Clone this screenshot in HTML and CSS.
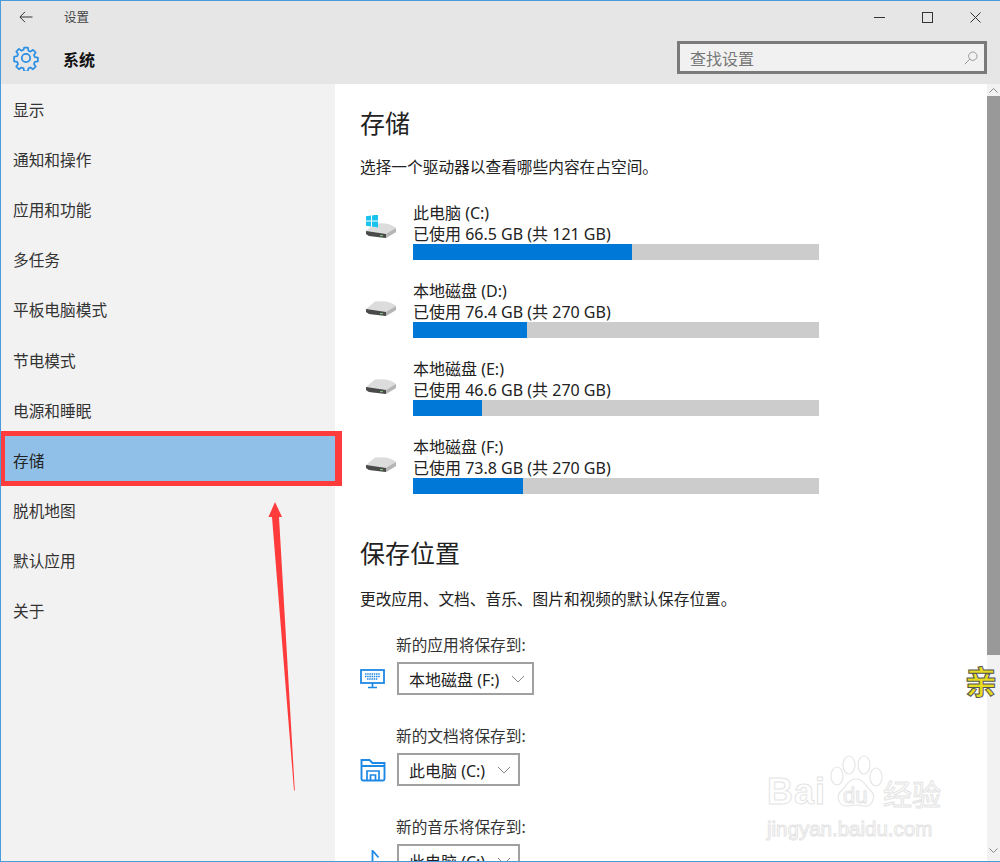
FILE: index.html
```html
<!DOCTYPE html>
<html lang="zh-CN">
<head>
<meta charset="utf-8">
<title>设置</title>
<link rel="stylesheet" href="styles.css">
</head>
<body>
<div class="window">
  <header class="header">
    <div class="titlebar">
      <svg class="back" viewBox="0 0 14 12" width="14" height="12"><path d="M13.500 6H1M6 .8 .9 6 6 11.200" fill="none" stroke="#333" stroke-width="1"/></svg>
      <span class="app-title">设置</span>
      <div class="controls">
        <svg viewBox="0 0 11 11" width="11" height="11"><path d="M0 5.500h11" stroke="#333" stroke-width="1"/></svg>
        <svg viewBox="0 0 11 11" width="11" height="11"><rect x=".5" y=".5" width="10" height="10" fill="none" stroke="#333"/></svg>
        <svg viewBox="0 0 11 11" width="11" height="11"><path d="M.5.500l10 10M10.500.500l-10 10" stroke="#333" stroke-width="1"/></svg>
      </div>
    </div>
    <div class="sysbar">
      <svg class="gear" viewBox="0 0 26 26" width="26" height="26">
        <path d="M10.900 1.500h4.200l.6 3.400 2.300 1 2.800-2 3 3-2 2.800 1 2.300 3.400.6v4.200l-3.400.6-1 2.300 2 2.800-3 3-2.800-2-2.300 1-.6 3.400h-4.200l-.6-3.400-2.300-1-2.800 2-3-3 2-2.800-1-2.300-3.400-.6V11.600l3.400-.6 1-2.300-2-2.800 3-3 2.800 2 2.300-1z" transform="translate(1.300 1.300) scale(.9)" fill="none" stroke="#2b8fe3" stroke-width="1.900" stroke-linejoin="round"/>
        <circle cx="13" cy="13" r="4.200" fill="none" stroke="#2b8fe3" stroke-width="1.800"/>
      </svg>
      <span class="sys-title">系统</span>
      <div class="search">
        <span class="search-text">查找设置</span>
        <svg viewBox="0 0 14 14" width="14" height="14"><circle cx="8.800" cy="5.200" r="4.200" fill="none" stroke="#999" stroke-width="1"/><path d="M5.800 8.200.8 13.200" stroke="#999" stroke-width="1"/></svg>
      </div>
    </div>
  </header>

  <div class="body">
    <nav class="sidebar">
      <a class="nav-item">显示</a>
      <a class="nav-item">通知和操作</a>
      <a class="nav-item">应用和功能</a>
      <a class="nav-item">多任务</a>
      <a class="nav-item">平板电脑模式</a>
      <a class="nav-item">节电模式</a>
      <a class="nav-item">电源和睡眠</a>
      <a class="nav-item selected">存储</a>
      <a class="nav-item">脱机地图</a>
      <a class="nav-item">默认应用</a>
      <a class="nav-item">关于</a>
    </nav>

    <main class="content">
      <h1 class="heading">存储</h1>
      <p class="desc">选择一个驱动器以查看哪些内容在占空间。</p>

      <div class="drives">
        <div class="drive">
          <svg class="drive-icon" viewBox="0 0 30 24" width="30" height="24">
            <path d="M0 16 9 8.500Q24 7 30 13v4l-10 6-17-2-3-2z" fill="#dcdcdc"/><path d="M20 19 30 13v4l-10 6z" fill="#b5b5b5"/><path d="M0 16 20 19v4L3 21l-3-2z" fill="#4a4a4a"/><rect x="14" y="20" width="3" height="1.200" fill="#7ac07a"/>
            <path d="M0 1.200 5 .5v5H0zM6 .4l6-.9v6H6zM0 6.500h5v5l-5-.7zM6 6.500h6v6l-6-.9z" fill="#19c3ee"/>
          </svg>
          <div class="drive-info">
            <div class="drive-name">此电脑 (C:)</div>
            <div class="drive-use">已使用 66.5 GB (共 121 GB)</div>
            <div class="bar"><div class="fill" style="width:54%"></div></div>
          </div>
        </div>
        <div class="drive">
          <svg class="drive-icon" viewBox="0 0 30 24" width="30" height="24">
            <path d="M0 16 9 8.500Q24 7 30 13v4l-10 6-17-2-3-2z" fill="#dcdcdc"/><path d="M20 19 30 13v4l-10 6z" fill="#b5b5b5"/><path d="M0 16 20 19v4L3 21l-3-2z" fill="#4a4a4a"/><rect x="14" y="20" width="3" height="1.200" fill="#7ac07a"/>
          </svg>
          <div class="drive-info">
            <div class="drive-name">本地磁盘 (D:)</div>
            <div class="drive-use">已使用 76.4 GB (共 270 GB)</div>
            <div class="bar"><div class="fill" style="width:28%"></div></div>
          </div>
        </div>
        <div class="drive">
          <svg class="drive-icon" viewBox="0 0 30 24" width="30" height="24">
            <path d="M0 16 9 8.500Q24 7 30 13v4l-10 6-17-2-3-2z" fill="#dcdcdc"/><path d="M20 19 30 13v4l-10 6z" fill="#b5b5b5"/><path d="M0 16 20 19v4L3 21l-3-2z" fill="#4a4a4a"/><rect x="14" y="20" width="3" height="1.200" fill="#7ac07a"/>
          </svg>
          <div class="drive-info">
            <div class="drive-name">本地磁盘 (E:)</div>
            <div class="drive-use">已使用 46.6 GB (共 270 GB)</div>
            <div class="bar"><div class="fill" style="width:17%"></div></div>
          </div>
        </div>
        <div class="drive">
          <svg class="drive-icon" viewBox="0 0 30 24" width="30" height="24">
            <path d="M0 16 9 8.500Q24 7 30 13v4l-10 6-17-2-3-2z" fill="#dcdcdc"/><path d="M20 19 30 13v4l-10 6z" fill="#b5b5b5"/><path d="M0 16 20 19v4L3 21l-3-2z" fill="#4a4a4a"/><rect x="14" y="20" width="3" height="1.200" fill="#7ac07a"/>
          </svg>
          <div class="drive-info">
            <div class="drive-name">本地磁盘 (F:)</div>
            <div class="drive-use">已使用 73.8 GB (共 270 GB)</div>
            <div class="bar"><div class="fill" style="width:27%"></div></div>
          </div>
        </div>
      </div>

      <h1 class="heading heading-save">保存位置</h1>
      <p class="desc desc-save">更改应用、文档、音乐、图片和视频的默认保存位置。</p>

      <div class="locations">
        <div class="location">
          <div class="loc-label">新的应用将保存到:</div>
          <div class="loc-row">
            <svg class="loc-icon" viewBox="0 0 26 20" width="26" height="20"><rect x="1" y="1" width="23" height="13" fill="none" stroke="#1e88e5" stroke-width="1.800"/><path d="M5 5h15M5 7.500h15M7 10h11" stroke="#1e88e5" stroke-width="1.500" stroke-dasharray="1.500 .7"/><path d="M12.500 14v4M8 18.500h9" stroke="#1e88e5" stroke-width="1.700"/></svg>
            <div class="select"><span>本地磁盘 (F:)</span><svg viewBox="0 0 14 8" width="14" height="8"><path d="M1 1l6 6 6-6" fill="none" stroke="#888"/></svg></div>
          </div>
        </div>
        <div class="location">
          <div class="loc-label">新的文档将保存到:</div>
          <div class="loc-row">
            <svg class="loc-icon" viewBox="0 0 26 24" width="26" height="24"><path d="M1.500 21a1.500 1.500 0 0 0 1.500 1.500h20a1.500 1.500 0 0 0 1.500-1.500V5H12.500l-3-3H1.500zM1.500 8h23" fill="none" stroke="#1e88e5" stroke-width="1.900"/><path d="M7 22v-9h12v9M10.500 22v-5h5v5" fill="none" stroke="#1e88e5" stroke-width="1.700"/></svg>
            <div class="select"><span>此电脑 (C:)</span><svg viewBox="0 0 14 8" width="14" height="8"><path d="M1 1l6 6 6-6" fill="none" stroke="#888"/></svg></div>
          </div>
        </div>
        <div class="location">
          <div class="loc-label">新的音乐将保存到:</div>
          <div class="loc-row">
            <svg class="loc-icon" viewBox="0 0 26 24" width="26" height="24"><path d="M12.500 1v22M12.500 1.500l6 7" fill="none" stroke="#1e88e5" stroke-width="1.800"/></svg>
            <div class="select"><span>此电脑 (C:)</span><svg viewBox="0 0 14 8" width="14" height="8"><path d="M1 1l6 6 6-6" fill="none" stroke="#888"/></svg></div>
          </div>
        </div>
      </div>
    </main>

    <div class="scrollbar">
      <svg class="sb-arrow" viewBox="0 0 9 5" width="9" height="5"><path d="M.5 4.500l4-4 4 4" fill="none" stroke="#888"/></svg>
      <div class="sb-thumb"></div>
      <svg class="sb-arrow sb-down" viewBox="0 0 9 5" width="9" height="5"><path d="M.5.500l4 4 4-4" fill="none" stroke="#888"/></svg>
    </div>
  </div>

  <div class="highlight"></div>
  <svg class="arrow" viewBox="0 0 40 300" width="40" height="300"><path d="M14 2 7.500 17H11L33 290.500 33.800 290.500 18 17h3z" fill="#ff3b3b"/></svg>
  <div class="stamp">亲</div>
  <div class="watermark">
    <svg class="paw" viewBox="0 0 56 56" width="56" height="56"><g fill="#fff" stroke="#e6e6e6" stroke-width="1.200"><ellipse cx="9" cy="22" rx="6" ry="9"/><ellipse cx="21" cy="11" rx="6" ry="9"/><ellipse cx="36" cy="11" rx="6" ry="9"/><ellipse cx="48" cy="23" rx="6" ry="9"/><path d="M28 25c8 0 10 8 15 12 5 5 2 16-7 15-4 0-5-1-8-1s-5 1-9 1c-9 0-11-10-6-15 5-4 7-12 15-12z"/></g></svg>
    <span class="wm-bai">Bai</span><span class="wm-du">du</span><span class="wm-cn">经验</span>
    <div class="wm-url">jingyan.baidu.com</div>
  </div>
</div>
</body>
</html>
```

FILE: styles.css
```css
* { box-sizing: border-box; }
html, body { margin: 0; padding: 0; height: 100%; overflow: hidden; background: #fff; }
body { font-family: "Noto Sans", "Noto Sans CJK SC", sans-serif; color: #222; }

.window {
  position: relative;
  width: 1000px;
  height: 862px;
  overflow: hidden;
  border-top: 1px solid #4a9bdc;
  border-left: 1px solid #4a9bdc;
  border-bottom: 1px solid #4a9bdc;
  display: flex;
  flex-direction: column;
}

.header { flex: none; height: 83px; background: #e6e6e6; }
.titlebar { height: 32px; display: flex; align-items: center; padding-left: 18px; }
.back { flex: none; }
.app-title { margin-left: 31px; margin-bottom: 1px; font-size: 12.500px; color: #444; }
.controls { margin-left: auto; display: flex; gap: 37px; padding-right: 19px; align-items: center; }

.sysbar { height: 51px; display: flex; align-items: center; padding-left: 12px; padding-bottom: 2px; }
.gear { flex: none; }
.sys-title { margin-left: 24px; padding-top: 3px; font-size: 16px; font-weight: 700; color: #111; }
.search {
  margin-left: auto;
  margin-right: 13px;
  width: 310px;
  height: 33px;
  border: 3px solid #7a7a7a;
  background: #f1f1f1;
  display: flex;
  align-items: center;
  justify-content: space-between;
  padding: 0 6px 0 10px;
}
.search-text { font-size: 16px; color: #777; }

.body { flex: 1; min-height: 0; display: flex; }

.sidebar {
  flex: none;
  width: 334px;
  background: #f2f2f2;
  display: flex;
  flex-direction: column;
}
.nav-item {
  flex: none;
  height: 50.200px;
  display: flex;
  align-items: center;
  padding-left: 12px;
  font-size: 15.700px;
  color: #333;
}
.nav-item.selected { background: #90c0e8; color: #222; }

.content { flex: 1; min-width: 0; padding: 19px 0 0 25px; overflow: hidden; }
.heading { margin: 0; font-size: 25px; font-weight: 400; line-height: 40px; color: #222; }
.heading-save { margin-top: 39px; }
.desc { margin: 12px 0 0; font-size: 15.700px; line-height: 24px; color: #222; }
.desc-save { margin-top: 14px; }

.drives { margin-top: 23px; display: flex; flex-direction: column; gap: 20px; }
.drive { display: flex; align-items: flex-start; }
.drive-icon { flex: none; margin: 13px 0 0 6px; }
.drive-info { margin-left: 17px; width: 406px; }
.drive-name, .drive-use { font-size: 16px; line-height: 23px; color: #222; white-space: nowrap; }
.drive-name { height: 20.500px; }
.drive-use { height: 21.500px; }
.bar { height: 16px; background: #ccc; }
.fill { height: 100%; background: #0078d7; }

.locations { margin-top: 22px; display: flex; flex-direction: column; gap: 29px; }
.loc-label { margin-left: 36px; font-size: 15.700px; line-height: 24px; color: #333; height: 25px; white-space: nowrap; }
.loc-row { display: flex; align-items: center; margin-top: 4px; }
.loc-icon { flex: none; width: 26px; }
.select {
  margin-left: 11px;
  display: inline-flex;
  align-items: center;
  gap: 12px;
  height: 33px;
  border: 2.500px solid #a0a0a0;
  padding: 0 7px 0 10px;
  font-size: 16px;
  color: #222;
  white-space: nowrap;
}

.scrollbar { flex: none; width: 13px; background: #f2f2f2; position: relative; display: flex; flex-direction: column; align-items: center; }
.sb-arrow { flex: none; margin-top: 4px; }
.sb-thumb { flex: none; width: 100%; height: 559px; margin-top: 3px; background: #999; }
.sb-down { margin-top: auto; margin-bottom: 8px; }

.highlight {
  position: absolute;
  left: -1px;
  top: 430px;
  width: 342px;
  height: 55px;
  border: 5px solid #ff3b3b;
  border-right-width: 7px;
}
.arrow { position: absolute; left: 260px; top: 499px; }

.stamp {
  position: absolute;
  left: 964px;
  top: 661px;
  font-size: 32px;
  line-height: 40px;
  font-weight: 700;
  color: #e8dc20;
  -webkit-text-stroke: 1px #555;
}

.watermark {
  position: absolute;
  left: 766px;
  top: 753px;
  width: 190px;
  height: 100px;
  color: #fff;
}
.paw { position: absolute; left: 61px; top: 0; }
.wm-bai, .wm-du, .wm-cn, .wm-url {
  position: absolute;
  font-family: "Liberation Sans", sans-serif;
  color: #fff;
  -webkit-text-stroke: 1px #e4e4e4;
  white-space: nowrap;
}
.wm-bai { left: 0; top: 18px; font-size: 36px; font-weight: 700; letter-spacing: 1px; line-height: 40px; }
.wm-du { left: 76px; top: 29px; font-size: 22px; line-height: 26px; }
.wm-cn { left: 116px; top: 21px; font-size: 29px; line-height: 36px; font-family: "Noto Sans CJK SC", sans-serif; }
.wm-url { left: 0; top: 62px; font-size: 20.500px; line-height: 26px; }
```
